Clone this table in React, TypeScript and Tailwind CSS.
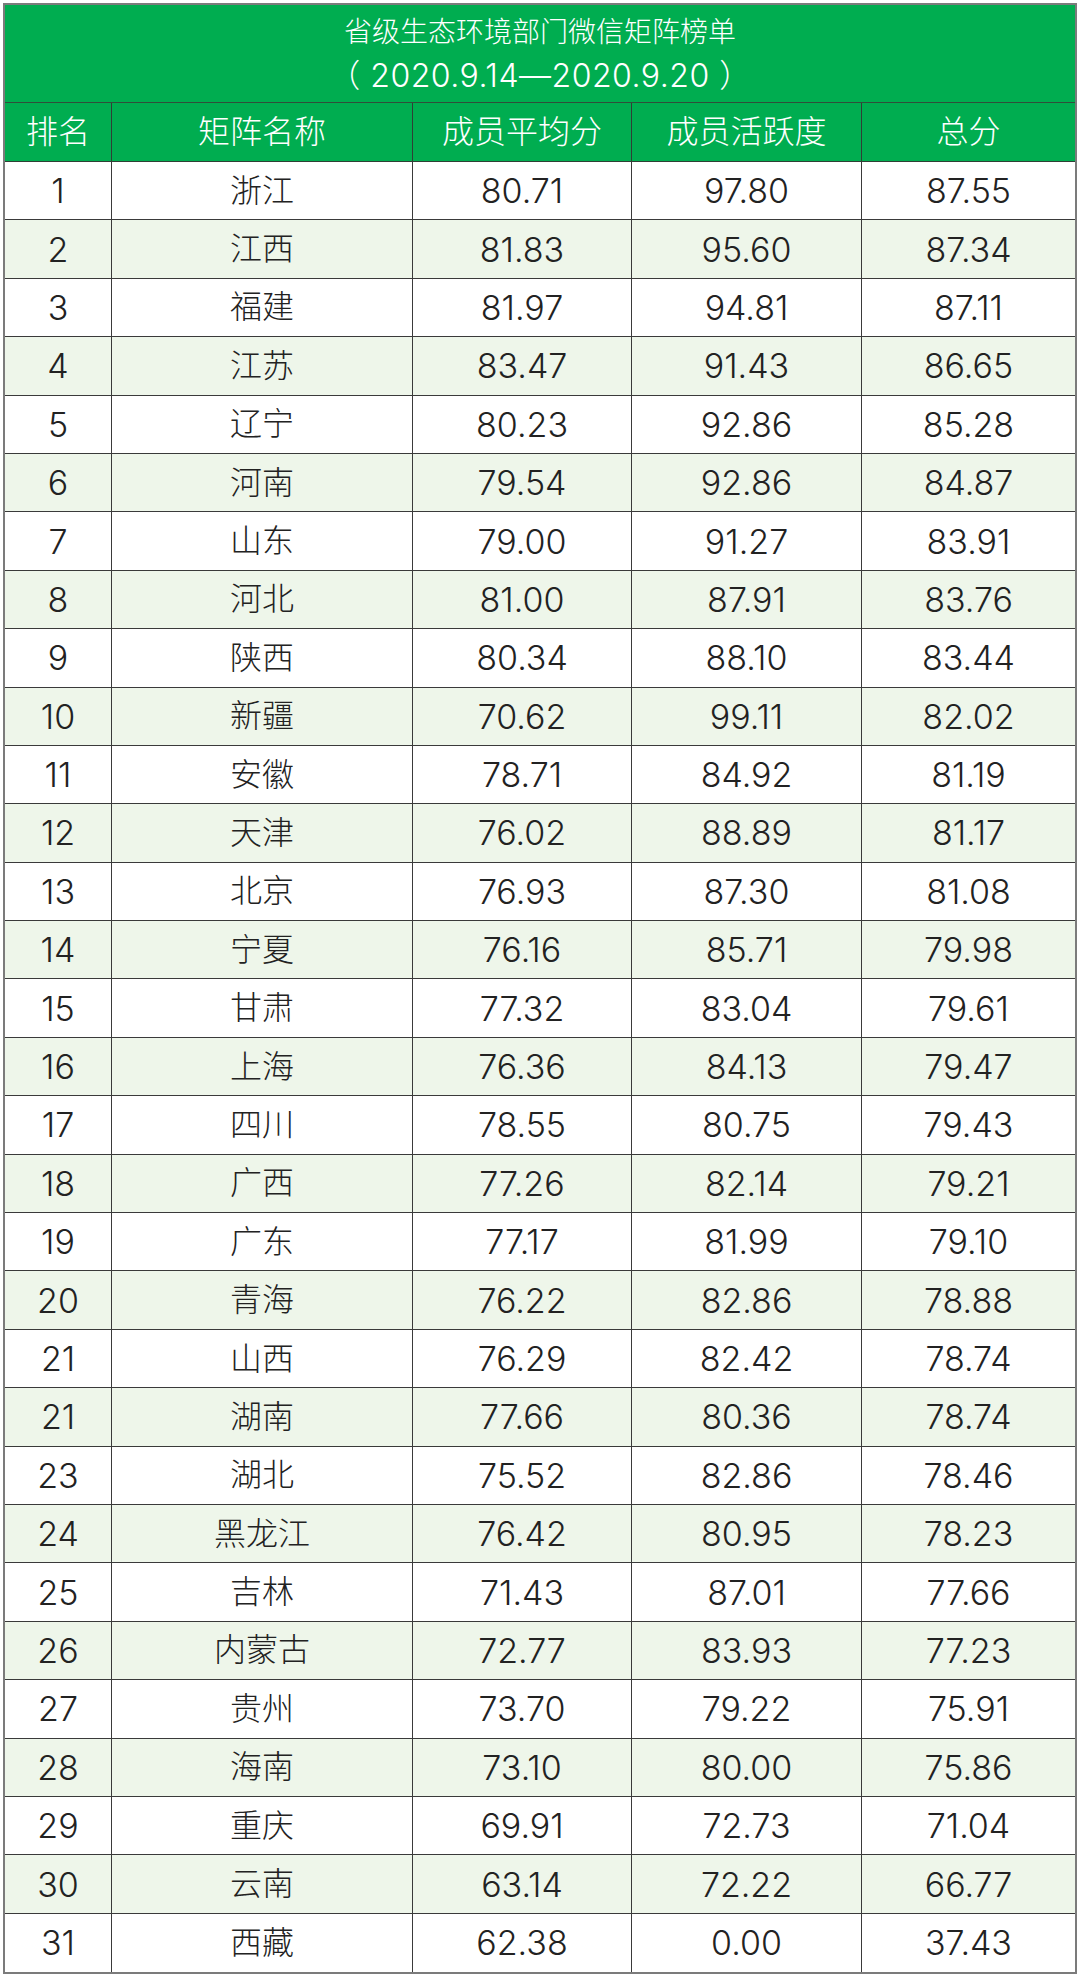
const rows: [string, string, string, string, string][] = [
  ["1", "浙江", "80.71", "97.80", "87.55"],
  ["2", "江西", "81.83", "95.60", "87.34"],
  ["3", "福建", "81.97", "94.81", "87.11"],
  ["4", "江苏", "83.47", "91.43", "86.65"],
  ["5", "辽宁", "80.23", "92.86", "85.28"],
  ["6", "河南", "79.54", "92.86", "84.87"],
  ["7", "山东", "79.00", "91.27", "83.91"],
  ["8", "河北", "81.00", "87.91", "83.76"],
  ["9", "陕西", "80.34", "88.10", "83.44"],
  ["10", "新疆", "70.62", "99.11", "82.02"],
  ["11", "安徽", "78.71", "84.92", "81.19"],
  ["12", "天津", "76.02", "88.89", "81.17"],
  ["13", "北京", "76.93", "87.30", "81.08"],
  ["14", "宁夏", "76.16", "85.71", "79.98"],
  ["15", "甘肃", "77.32", "83.04", "79.61"],
  ["16", "上海", "76.36", "84.13", "79.47"],
  ["17", "四川", "78.55", "80.75", "79.43"],
  ["18", "广西", "77.26", "82.14", "79.21"],
  ["19", "广东", "77.17", "81.99", "79.10"],
  ["20", "青海", "76.22", "82.86", "78.88"],
  ["21", "山西", "76.29", "82.42", "78.74"],
  ["21", "湖南", "77.66", "80.36", "78.74"],
  ["23", "湖北", "75.52", "82.86", "78.46"],
  ["24", "黑龙江", "76.42", "80.95", "78.23"],
  ["25", "吉林", "71.43", "87.01", "77.66"],
  ["26", "内蒙古", "72.77", "83.93", "77.23"],
  ["27", "贵州", "73.70", "79.22", "75.91"],
  ["28", "海南", "73.10", "80.00", "75.86"],
  ["29", "重庆", "69.91", "72.73", "71.04"],
  ["30", "云南", "63.14", "72.22", "66.77"],
  ["31", "西藏", "62.38", "0.00", "37.43"],
]

const headers = ["排名", "矩阵名称", "成员平均分", "成员活跃度", "总分"]

export default function App() {
  return (
    <div className="w-[1080px] bg-white p-[3px] pb-[1px] font-['Inter','Noto_Sans_CJK_SC',sans-serif]">
      <div className="border-2 border-[#7b7b7b]">
        <div className="h-[98px] bg-[#00ad50] border-b border-[#2f4f3a] flex flex-col items-center justify-center text-white font-light">
          <p className="text-[28px] leading-[44px]">省级生态环境部门微信矩阵榜单</p>
          <p className="text-[32px] leading-[44px] tracking-[0.5px]">（ 2020.9.14—2020.9.20 ）</p>
        </div>

        <div className="grid grid-cols-[107px_301px_219px_230px_213px] h-[59px] bg-[#00ad50] border-b border-[#2f3f35]">
          {headers.map((h, i) => (
            <div
              key={h}
              className={"flex items-center justify-center text-white text-[32px] font-light " + (i < 4 ? "border-r border-[#2f3f35]" : "")}
            >
              {h}
            </div>
          ))}
        </div>

        {rows.map((r, idx) => (
          <div
            key={idx}
            className={
              "grid grid-cols-[107px_301px_219px_230px_213px] h-[58.4px] " +
              (idx < rows.length - 1 ? "border-b border-[#3a3a3a] " : "") +
              (idx % 2 === 1 ? "bg-[#eef6ea]" : "bg-white")
            }
          >
            {r.map((c, i) => (
              <div
                key={i}
                className={
                  "flex items-center justify-center text-[#222] font-light " +
                  (i === 1 ? "text-[32px] " : "text-[34px] ") +
                  (i < 4 ? "border-r border-[#3a3a3a]" : "")
                }
              >
                {c}
              </div>
            ))}
          </div>
        ))}
      </div>
    </div>
  )
}
